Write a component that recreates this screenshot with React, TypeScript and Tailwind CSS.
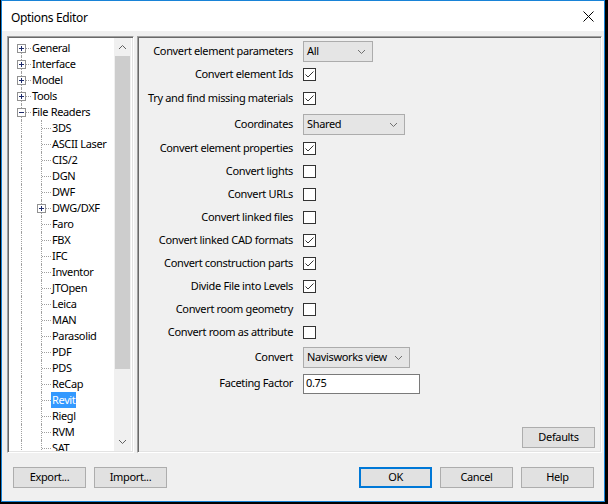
import React from "react";

type TreeNode = { label: string; level: 0 | 1; box?: "plus" | "minus" };

const treeNodes: TreeNode[] = [
  { label: "General", level: 0, box: "plus" },
  { label: "Interface", level: 0, box: "plus" },
  { label: "Model", level: 0, box: "plus" },
  { label: "Tools", level: 0, box: "plus" },
  { label: "File Readers", level: 0, box: "minus" },
  { label: "3DS", level: 1 },
  { label: "ASCII Laser", level: 1 },
  { label: "CIS/2", level: 1 },
  { label: "DGN", level: 1 },
  { label: "DWF", level: 1 },
  { label: "DWG/DXF", level: 1, box: "plus" },
  { label: "Faro", level: 1 },
  { label: "FBX", level: 1 },
  { label: "IFC", level: 1 },
  { label: "Inventor", level: 1 },
  { label: "JTOpen", level: 1 },
  { label: "Leica", level: 1 },
  { label: "MAN", level: 1 },
  { label: "Parasolid", level: 1 },
  { label: "PDF", level: 1 },
  { label: "PDS", level: 1 },
  { label: "ReCap", level: 1 },
  { label: "Revit", level: 1 },
  { label: "Riegl", level: 1 },
  { label: "RVM", level: 1 },
  { label: "SAT", level: 1 },
];

type Row =
  | { kind: "select"; label: string; value: string; width: string; mt?: string }
  | { kind: "check"; label: string; checked: boolean; mt?: string }
  | { kind: "text"; label: string; value: string; mt?: string };

const rows: Row[] = [
  { kind: "select", label: "Convert element parameters", value: "All", width: "w-[70px]" },
  { kind: "check", label: "Convert element Ids", checked: true },
  { kind: "check", label: "Try and find missing materials", checked: true, mt: "mt-[1px]" },
  { kind: "select", label: "Coordinates", value: "Shared", width: "w-[102px]", mt: "mt-[3px]" },
  { kind: "check", label: "Convert element properties", checked: true, mt: "mt-[1px]" },
  { kind: "check", label: "Convert lights", checked: false },
  { kind: "check", label: "Convert URLs", checked: false },
  { kind: "check", label: "Convert linked files", checked: false },
  { kind: "check", label: "Convert linked CAD formats", checked: true },
  { kind: "check", label: "Convert construction parts", checked: true },
  { kind: "check", label: "Divide File into Levels", checked: true },
  { kind: "check", label: "Convert room geometry", checked: false },
  { kind: "check", label: "Convert room as attribute", checked: false },
  { kind: "select", label: "Convert", value: "Navisworks view", width: "w-[107px]", mt: "mt-[2px]" },
  { kind: "text", label: "Faceting Factor", value: "0.75", mt: "mt-[3px]" },
];

const sunken =
  "border border-t-[#a0a0a0] border-l-[#a0a0a0] border-r-white border-b-white shadow-[inset_1px_1px_0_#696969,inset_-1px_-1px_0_#e3e3e3]";

const Chevron = ({ up = false, className = "" }: { up?: boolean; className?: string }) => (
  <svg width="9" height="6" viewBox="0 0 9 6" className={className}>
    <polyline
      points={up ? "1,5 4.5,1.5 8,5" : "1,1 4.5,4.5 8,1"}
      fill="none"
      stroke="currentColor"
      strokeWidth="1"
    />
  </svg>
);

const ExpandBox = ({ type }: { type: "plus" | "minus" }) => (
  <div className="absolute left-[6px] top-[4px] flex h-[9px] w-[9px] items-center justify-center border border-[#919191] bg-white">
    <svg width="7" height="7" viewBox="0 0 7 7">
      <line x1="1" y1="3.5" x2="6" y2="3.5" stroke="#1d2a6b" strokeWidth="1" />
      {type === "plus" && <line x1="3.5" y1="1" x2="3.5" y2="6" stroke="#1d2a6b" strokeWidth="1" />}
    </svg>
  </div>
);

const TreeCell = ({
  vertical,
  horizontal,
  fromMiddle = false,
  box,
}: {
  vertical: boolean;
  horizontal: boolean;
  fromMiddle?: boolean;
  box?: "plus" | "minus";
}) => (
  <div className="relative h-4 w-5 shrink-0">
    {vertical && (
      <div
        className={`absolute left-[10px] bottom-0 w-0 border-l border-dotted border-[#a0a0a0] ${
          fromMiddle ? "top-2" : "top-0"
        }`}
      />
    )}
    {horizontal && (
      <div className="absolute left-[11px] top-[8px] w-[9px] border-t border-dotted border-[#a0a0a0]" />
    )}
    {box && <ExpandBox type={box} />}
  </div>
);

const TreeView = () => (
  <div className={`flex h-full w-[127px] shrink-0 bg-white ${sunken} p-[1px]`}>
    <div className="flex-1 overflow-hidden pl-[2px] pt-[2px]">
      {treeNodes.map((node, i) => (
        <div key={node.label} className="flex h-4 items-center whitespace-nowrap">
          <TreeCell
            vertical
            horizontal={node.level === 0}
            fromMiddle={i === 0}
            box={node.level === 0 ? node.box : undefined}
          />
          {node.level === 1 && <TreeCell vertical horizontal box={node.box} />}
          <span
            className={`px-[1px] leading-4 ${
              node.label === "Revit" ? "bg-[#3399ff] text-white" : "text-black"
            }`}
          >
            {node.label}
          </span>
        </div>
      ))}
    </div>
    <div className="mr-[1px] flex w-[17px] shrink-0 flex-col bg-[#f0f0f0]">
      <div className="flex h-[18px] items-center justify-center text-[#606060]">
        <Chevron up />
      </div>
      <div className="mx-[1px] h-[313px] bg-[#cdcdcd]" />
      <div className="flex-1" />
      <div className="flex h-[18px] items-center justify-center text-[#606060]">
        <Chevron />
      </div>
    </div>
  </div>
);

const Checkbox = ({ checked }: { checked: boolean }) => (
  <div className="flex h-[13px] w-[13px] items-center justify-center border border-[#333333] bg-white">
    {checked && (
      <svg width="11" height="11" viewBox="0 0 11 11">
        <polyline points="1.5,5.5 4,8 9.5,2.5" fill="none" stroke="#333333" strokeWidth="1" />
      </svg>
    )}
  </div>
);

const SelectBox = ({ value, width }: { value: string; width: string }) => (
  <div
    className={`flex h-[21px] ${width} items-center justify-between whitespace-nowrap border border-[#acacac] bg-[#e5e5e5] pl-[3px] pr-[6px]`}
  >
    <span>{value}</span>
    <Chevron className="text-[#707070]" />
  </div>
);

const Button = ({ label, primary = false }: { label: string; primary?: boolean }) => (
  <button
    className={`flex h-[21px] w-[73px] items-center justify-center bg-[#e1e1e1] text-black ${
      primary ? "border-2 border-[#0078d7]" : "border border-[#adadad]"
    }`}
  >
    {label}
  </button>
);

const SettingsPanel = () => (
  <div className={`flex h-full flex-1 flex-col bg-[#f0f0f0] ${sunken} p-[1px]`}>
    <div className="flex flex-col pt-[2px]">
      {rows.map((row) => (
        <div key={row.label} className={`flex h-[23px] items-center ${row.mt ?? ""}`}>
          <div className="w-[154px] shrink-0 whitespace-nowrap text-right">{row.label}</div>
          <div className="ml-[10px] flex items-center">
            {row.kind === "check" && <Checkbox checked={row.checked} />}
            {row.kind === "select" && <SelectBox value={row.value} width={row.width} />}
            {row.kind === "text" && (
              <div className="flex h-[20px] w-[117px] items-center border border-[#7a7a7a] bg-white pl-[2px]">
                {row.value}
              </div>
            )}
          </div>
        </div>
      ))}
    </div>
    <div className="mt-auto mb-[3px] mr-[5px] self-end">
      <Button label="Defaults" />
    </div>
  </div>
);

export default function App() {
  return (
    <div className="h-[504px] w-[608px] bg-black font-['Segoe_UI','Noto_Sans',sans-serif] text-[11px] tracking-[-0.35px] text-black">
      <div className="ml-[1px] flex h-[502px] w-[604px] flex-col border border-[#1883d7] bg-[#f0f0f0]">
        <div className="flex h-[30px] shrink-0 items-center justify-between bg-white pl-[9px] pr-[9px] pt-[3px]">
          <span className="text-[12px]">Options Editor</span>
          <svg width="11" height="11" viewBox="0 0 11 11" className="mr-[1px] mb-[2px]">
            <line x1="0.5" y1="0.5" x2="10.5" y2="10.5" stroke="#000" strokeWidth="1" />
            <line x1="10.5" y1="0.5" x2="0.5" y2="10.5" stroke="#000" strokeWidth="1" />
          </svg>
        </div>
        <div className="flex flex-1 flex-col pt-[5px]">
          <div className="flex h-[417px] gap-[3px] pl-[5px] pr-[2px]">
            <TreeView />
            <SettingsPanel />
          </div>
          <div className="mt-[14px] flex items-center pl-[11px] pr-[10px]">
            <div className="flex gap-[8px]">
              <Button label="Export..." />
              <Button label="Import..." />
            </div>
            <div className="ml-auto flex gap-[8px]">
              <Button label="OK" primary />
              <Button label="Cancel" />
              <Button label="Help" />
            </div>
          </div>
        </div>
      </div>
    </div>
  );
}
